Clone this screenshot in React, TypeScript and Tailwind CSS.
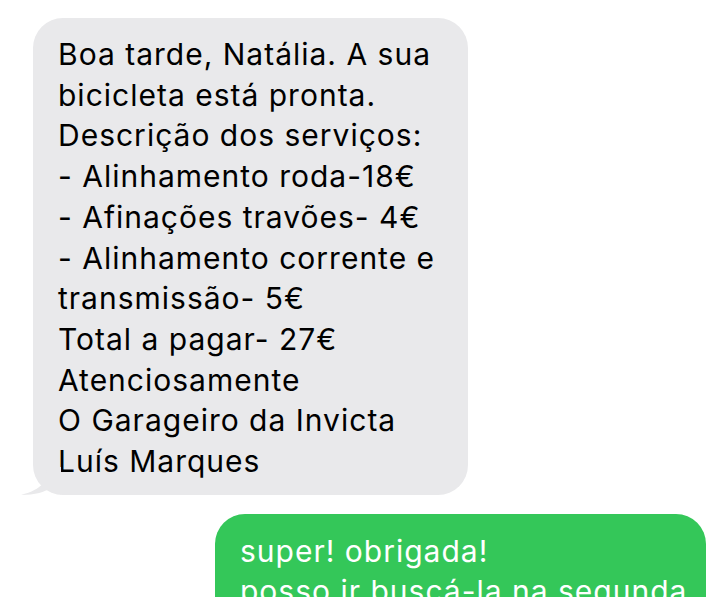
const lines = [
  'Boa tarde, Natália. A sua',
  'bicicleta está pronta.',
  'Descrição dos serviços:',
  '- Alinhamento roda-18€',
  '- Afinações travões- 4€',
  '- Alinhamento corrente e',
  'transmissão- 5€',
  'Total a pagar- 27€',
  'Atenciosamente',
  'O Garageiro da Invicta',
  'Luís Marques',
];

const App = () => {
  return (
    <div className="w-[706px] h-[597px] overflow-hidden bg-white font-['Inter',sans-serif] text-[30px] leading-[40.7px] tracking-[1px]">
      <div className="pt-[18px] pl-[33px]">
        <div className="relative w-[435px] rounded-[30px] bg-[#e9e9eb] pt-[16px] pb-[13px] pl-[25px] text-black">
          {lines.map((l) => (
            <div key={l} className="whitespace-nowrap">
              {l}
            </div>
          ))}
          <svg
            className="absolute -left-[12px] bottom-0"
            width="40"
            height="28"
            viewBox="0 0 40 28"
          >
            <path d="M26 0 C26 14 22 22 0 28 C14 28 24 25 32 20 L40 28 L40 0 Z" fill="#e9e9eb" />
          </svg>
        </div>
      </div>
      <div className="mt-[19px] ml-[215px] rounded-[30px] bg-[#34c759] pt-[17px] pb-[20px] pl-[25px] text-white">
        <div className="whitespace-nowrap">super! obrigada!</div>
        <div className="whitespace-nowrap">posso ir buscá-la na segunda</div>
      </div>
    </div>
  );
};

export default App;
